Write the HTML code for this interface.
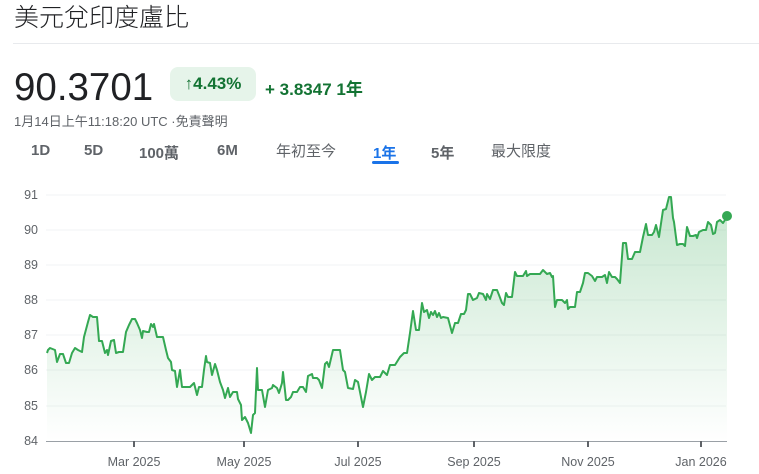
<!DOCTYPE html>
<html><head><meta charset="utf-8"><style>
body{margin:0;width:759px;height:474px;background:#fff;font-family:"Liberation Sans","Noto Sans CJK TC",sans-serif;position:relative;overflow:hidden}
.a{position:absolute;white-space:nowrap}
.title{left:14px;top:0px;font-size:25px;color:#202124;font-family:"Noto Sans CJK TC",sans-serif;font-weight:300;line-height:32px}
.hr{left:13px;top:43px;width:746px;height:1px;background:#e8eaed}
.price{left:14px;top:65px;font-size:38.5px;color:#202124;line-height:46px}
.badge{left:170px;top:67px;width:86px;height:34px;background:#e6f4ea;border-radius:8px;color:#137333;font-size:17px;line-height:34px;text-align:center;font-weight:bold}
.chg{left:265px;top:75px;font-size:17px;color:#137333;font-weight:bold}
.ts{left:14px;top:111px;font-size:13px;color:#5f6368}
.tab{top:142px;font-size:15px;color:#5f6368;font-weight:bold}
.tab.c{font-weight:normal;font-family:"Noto Sans CJK TC",sans-serif;top:140px}
</style></head><body>
<div class="a title">美元兌印度盧比</div>
<div class="a hr"></div>
<div class="a price">90.3701</div>
<div class="a badge">↑4.43%</div>
<div class="a chg">+ 3.8347 1年</div>
<div class="a ts">1月14日上午11:18:20 UTC ·免責聲明</div>
<div class="a tab" style="left:31px">1D</div>
<div class="a tab" style="left:84px">5D</div>
<div class="a tab" style="left:139px">100萬</div>
<div class="a tab" style="left:217px">6M</div>
<div class="a tab c" style="left:276px">年初至今</div>
<div class="a tab" style="left:373px;color:#1a73e8">1年</div>
<div class="a tab" style="left:431px">5年</div>
<div class="a tab c" style="left:491px">最大限度</div>
<div class="a" style="left:372px;top:161px;width:27px;height:3px;background:#1a73e8;border-radius:2px"></div>
<svg class="a" style="left:0;top:0" width="759" height="474">
<defs><linearGradient id="g" x1="0" y1="0" x2="0" y2="1"><stop offset="0" stop-color="#34a853" stop-opacity="0.28"/><stop offset="1" stop-color="#34a853" stop-opacity="0"/></linearGradient></defs>
<g stroke="#f1f3f4" stroke-width="1">
<line x1="46" x2="726" y1="195" y2="195"/><line x1="46" x2="726" y1="230" y2="230"/><line x1="46" x2="726" y1="265" y2="265"/><line x1="46" x2="726" y1="300" y2="300"/><line x1="46" x2="726" y1="335" y2="335"/><line x1="46" x2="726" y1="370" y2="370"/><line x1="46" x2="726" y1="406" y2="406"/>
</g>
<g font-size="12.5" fill="#5f6368" text-anchor="end" font-family="Liberation Sans,sans-serif">
<text x="38" y="199">91</text><text x="38" y="234">90</text><text x="38" y="269">89</text><text x="38" y="304">88</text><text x="38" y="339">87</text><text x="38" y="374">86</text><text x="38" y="410">85</text><text x="38" y="445">84</text>
</g>
<polygon fill="url(#g)" points="47,441 47,353 48,350 50,348 55,350 57,362 60,354 63,354 66,363 69,363 72,353 75,348 78,350 82,352 84,337 88,322 90,315 93,317 97,317 99,341 102,341 105,353 107,350 108,355 111,341 114,340 116,353 119,352 123,352 126,332 129,325 132,319 135,319 137,323 140,330 142,338 143,331 147,332 149,332 151,324 153,327 154,324 157,337 163,337 166,350 168,358 171,362 172,370 175,371 177,387 180,370 182,387 185,387 190,387 192,385 194,383 197,395 199,387 202,387 204,370 206,356 207,362 210,363 212,375 215,364 217,370 220,382 223,390 225,398 228,388 230,397 233,392 237,392 238,399 241,405 242,420 245,417 248,423 251,433 253,415 255,413 257,368 258,390 262,390 265,407 268,390 272,388 273,385 277,388 279,393 282,383 283,372 286,400 288,400 291,397 293,392 297,392 300,387 303,387 306,392 308,376 312,374 313,378 317,378 319,380 322,388 325,364 327,362 329,367 333,350 340,350 343,370 345,372 348,388 353,389 355,380 358,382 363,407 366,392 369,374 372,380 375,377 380,377 383,371 387,375 390,365 395,365 400,357 404,353 407,353 410,333 413,311 416,330 419,330 422,303 424,312 427,310 429,318 431,312 433,315 435,311 437,317 439,313 441,318 443,317 448,318 452,333 455,323 458,323 461,314 464,314 466,310 468,294 470,294 473,300 477,298 479,293 483,294 486,300 487,294 490,299 493,290 497,290 499,295 502,303 504,305 506,293 508,297 512,297 515,272 517,276 523,276 526,271 527,276 530,274 537,274 540,274 543,270 547,274 550,273 552,277 553,276 555,307 557,300 562,300 565,303 567,300 568,309 570,307 575,307 577,292 580,292 583,283 585,273 588,273 592,276 595,281 597,277 602,277 605,275 607,283 609,272 612,277 615,277 617,279 620,283 623,243 626,243 628,259 632,259 635,252 640,252 643,237 646,224 648,235 652,235 654,232 656,225 659,237 663,210 666,209 669,197 671,197 673,218 674,222 677,245 680,244 683,244 685,246 687,227 690,236 693,236 696,235 697,238 699,232 703,230 706,230 708,222 711,225 713,234 715,233 717,222 720,220 723,223 727,217 727,441"/>
<polyline fill="none" stroke="#34a853" stroke-width="2" stroke-linejoin="round" points="47,353 48,350 50,348 55,350 57,362 60,354 63,354 66,363 69,363 72,353 75,348 78,350 82,352 84,337 88,322 90,315 93,317 97,317 99,341 102,341 105,353 107,350 108,355 111,341 114,340 116,353 119,352 123,352 126,332 129,325 132,319 135,319 137,323 140,330 142,338 143,331 147,332 149,332 151,324 153,327 154,324 157,337 163,337 166,350 168,358 171,362 172,370 175,371 177,387 180,370 182,387 185,387 190,387 192,385 194,383 197,395 199,387 202,387 204,370 206,356 207,362 210,363 212,375 215,364 217,370 220,382 223,390 225,398 228,388 230,397 233,392 237,392 238,399 241,405 242,420 245,417 248,423 251,433 253,415 255,413 257,368 258,390 262,390 265,407 268,390 272,388 273,385 277,388 279,393 282,383 283,372 286,400 288,400 291,397 293,392 297,392 300,387 303,387 306,392 308,376 312,374 313,378 317,378 319,380 322,388 325,364 327,362 329,367 333,350 340,350 343,370 345,372 348,388 353,389 355,380 358,382 363,407 366,392 369,374 372,380 375,377 380,377 383,371 387,375 390,365 395,365 400,357 404,353 407,353 410,333 413,311 416,330 419,330 422,303 424,312 427,310 429,318 431,312 433,315 435,311 437,317 439,313 441,318 443,317 448,318 452,333 455,323 458,323 461,314 464,314 466,310 468,294 470,294 473,300 477,298 479,293 483,294 486,300 487,294 490,299 493,290 497,290 499,295 502,303 504,305 506,293 508,297 512,297 515,272 517,276 523,276 526,271 527,276 530,274 537,274 540,274 543,270 547,274 550,273 552,277 553,276 555,307 557,300 562,300 565,303 567,300 568,309 570,307 575,307 577,292 580,292 583,283 585,273 588,273 592,276 595,281 597,277 602,277 605,275 607,283 609,272 612,277 615,277 617,279 620,283 623,243 626,243 628,259 632,259 635,252 640,252 643,237 646,224 648,235 652,235 654,232 656,225 659,237 663,210 666,209 669,197 671,197 673,218 674,222 677,245 680,244 683,244 685,246 687,227 690,236 693,236 696,235 697,238 699,232 703,230 706,230 708,222 711,225 713,234 715,233 717,222 720,220 723,223 727,217"/>
<circle cx="727" cy="216" r="5" fill="#34a853"/>
<line x1="46" x2="727" y1="441.5" y2="441.5" stroke="#9aa0a6" stroke-width="1"/>
<g stroke="#5f6368" stroke-width="2"><line x1="134" x2="134" y1="441" y2="447"/><line x1="244" x2="244" y1="441" y2="447"/><line x1="358" x2="358" y1="441" y2="447"/><line x1="474" x2="474" y1="441" y2="447"/><line x1="588" x2="588" y1="441" y2="447"/><line x1="701" x2="701" y1="441" y2="447"/></g>
<g font-size="12.5" fill="#5f6368" text-anchor="middle" font-family="Liberation Sans,sans-serif">
<text x="134" y="466">Mar 2025</text><text x="244" y="466">May 2025</text><text x="358" y="466">Jul 2025</text><text x="474" y="466">Sep 2025</text><text x="588" y="466">Nov 2025</text><text x="701" y="466">Jan 2026</text>
</g>
</svg>
</body></html>
